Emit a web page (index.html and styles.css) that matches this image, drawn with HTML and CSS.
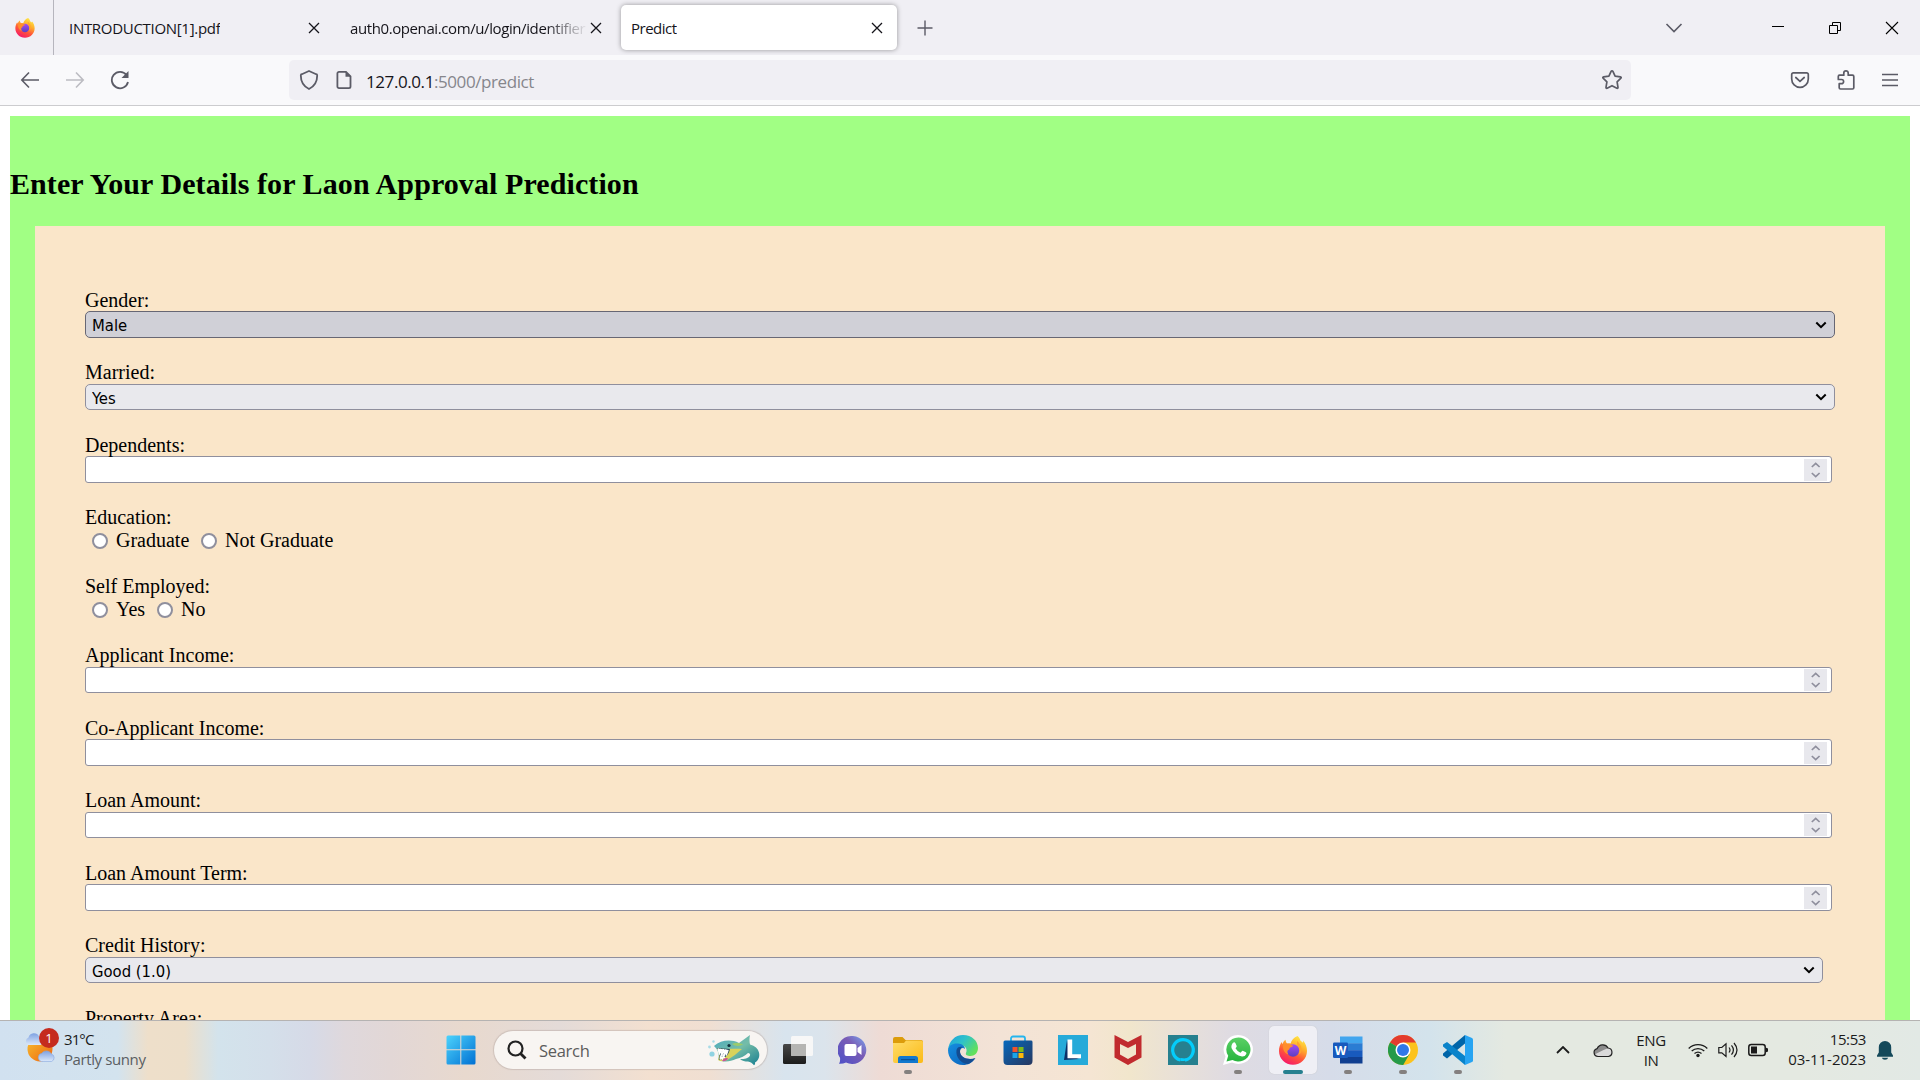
FILE: index.html
```html
<!DOCTYPE html>
<html lang="en">
<head>
<meta charset="utf-8">
<title>Predict</title>
<link rel="stylesheet" href="styles.css">
</head>
<body>
<svg class="defs" width="0" height="0" aria-hidden="true">
  <defs>
    <linearGradient id="flame" x1="0.8" y1="0" x2="0.3" y2="1"><stop offset="0" stop-color="#fff04a"/><stop offset=".35" stop-color="#ffb02c"/><stop offset=".65" stop-color="#ff5638"/><stop offset="1" stop-color="#f5156c"/></linearGradient>
    <linearGradient id="globe" x1="0" y1="0" x2="0" y2="1"><stop offset="0" stop-color="#a34cf5"/><stop offset="1" stop-color="#5b3fc0"/></linearGradient>
    <linearGradient id="win" x1="0" y1="0" x2="1" y2="1"><stop offset="0" stop-color="#4cd3fc"/><stop offset="1" stop-color="#0070d3"/></linearGradient>
    <linearGradient id="sun" x1="0" y1="0" x2="1" y2="1"><stop offset="0" stop-color="#f7c02f"/><stop offset="1" stop-color="#ee6412"/></linearGradient>
    <linearGradient id="cloud" x1="0" y1="0" x2="0" y2="1"><stop offset="0" stop-color="#7fa2e2"/><stop offset="1" stop-color="#dbe8fa"/></linearGradient>
    <linearGradient id="fish" x1="0" y1="0" x2="1" y2="1"><stop offset="0" stop-color="#4aa9c1"/><stop offset=".5" stop-color="#75bda8"/><stop offset="1" stop-color="#187f91"/></linearGradient>
    <linearGradient id="chat" x1="0" y1="1" x2="1" y2="0"><stop offset="0" stop-color="#4b50c9"/><stop offset=".6" stop-color="#7a5cb5"/><stop offset="1" stop-color="#79a8f0"/></linearGradient>
    <linearGradient id="folder" x1="0" y1="0" x2="1" y2="1"><stop offset="0" stop-color="#ffdd6b"/><stop offset="1" stop-color="#fbba16"/></linearGradient>
    <linearGradient id="edgeTop" x1="0" y1="0" x2="1" y2=".6"><stop offset="0" stop-color="#1e9fe0"/><stop offset=".5" stop-color="#2fc2c9"/><stop offset="1" stop-color="#62e05b"/></linearGradient>
    <linearGradient id="edgeLow" x1="0" y1="0" x2="1" y2="1"><stop offset="0" stop-color="#168ee0"/><stop offset="1" stop-color="#0a5fb8"/></linearGradient>
    <linearGradient id="store" x1="0" y1="0" x2="1" y2="1"><stop offset="0" stop-color="#0669bd"/><stop offset="1" stop-color="#27375f"/></linearGradient>
    <linearGradient id="wa" x1="0" y1="0" x2="0" y2="1"><stop offset="0" stop-color="#5bd066"/><stop offset="1" stop-color="#27b43e"/></linearGradient>
    <linearGradient id="dark" x1="0" y1="0" x2="0" y2="1"><stop offset="0" stop-color="#474747"/><stop offset="1" stop-color="#1c1c1c"/></linearGradient>
    <symbol id="firefox" viewBox="0 0 28 29">
      <path d="M18.5 0c1.6 1.3 2.6 3.2 3.2 5 1 .3 1.600.9 2.300 1.700.2-1 .1-1.500 0-2.100C26.500 7.500 28 11 28 15c0 7.700-6.200 13.800-14 13.800S0 22.700 0 15c0-3.400 1-6.200 2.600-9 .3 1 .7 1.600 1.100 2C4 6.300 5.200 4.600 6.600 3.800 6.600 5.300 7 6.600 8.300 7.600c1-.4 2.300-.4 3.300-.2C12.500 4 15 1.300 18.500 0z" fill="url(#flame)"/>
      <circle cx="14" cy="14.500" r="6.200" fill="url(#globe)"/>
      <path d="M4 9c2-1 4-1.500 6-.8 1.300.4 2 1.100 4.200 1.200-.4 1.300-1.600 1.500-3 2-.7.400-.8 1.300-.9 2.100C8 14 8 16.500 9.500 18.500 5.500 18 3.500 13 4 9z" fill="#ff8d2c"/>
      <path d="M18 9c3 2 3.500 6.500 1.500 9.500C24 17 23.500 9.500 18 5z" fill="#ffa52d"/>
    </symbol>
    <symbol id="x" viewBox="0 0 12 12"><path d="M1 1l10 10M11 1L1 11" fill="none" stroke="#15141a" stroke-width="1.300"/></symbol>
    <symbol id="down" viewBox="0 0 12 8"><path d="M1.300 1.500L6 6.200l4.700-4.700" fill="none" stroke="#000" stroke-width="2"/></symbol>
    <symbol id="spin" viewBox="0 0 23 22"><path fill="#e8e8ed" d="M0 0h23v22H0z"/><path d="M7.800 8l3.900-3.600L15.600 8M7.800 14l3.900 3.600 3.900-3.600" fill="none" stroke="#8f8f9d" stroke-width="1.700"/></symbol>
  </defs>
</svg>

<header class="tabs">
  <div class="pinned"><svg width="20" height="20"><use href="#firefox"/></svg></div>
  <div class="tab tab-first"><span class="tab-title t-intro">INTRODUCTION[1].pdf</span><svg class="close" width="12" height="12"><use href="#x"/></svg></div>
  <div class="tab tab-second"><span class="tab-title t-auth">auth0.openai.com/u/login/identifier</span><svg class="close" width="12" height="12"><use href="#x"/></svg></div>
  <div class="tab tab-active"><span class="tab-title">Predict</span><svg class="close" width="12" height="12"><use href="#x"/></svg></div>
  <svg class="plus" width="16" height="16"><path d="M8 .5v15M.5 8h15" stroke="#5b5b66" stroke-width="1.400"/></svg>
  <div class="window-controls">
    <svg width="18" height="12"><path d="M1.500 2l7.500 7.500L16.500 2" fill="none" stroke="#5b5b66" stroke-width="1.600"/></svg>
    <svg width="12" height="12"><path d="M0 4.500h12" stroke="#000"/></svg>
    <svg width="12" height="12"><path d="M.5 3.500h8v8h-8zM3.500 3.500v-3h8v8h-3" fill="none" stroke="#000"/></svg>
    <svg width="14" height="14"><path d="M1 1l12 12M13 1L1 13" stroke="#000" stroke-width="1.100"/></svg>
  </div>
</header>

<nav class="toolbar">
  <div class="nav-buttons">
    <svg width="20" height="20" fill="none" stroke="#5b5b66" stroke-width="1.600"><path d="M19 10H2M9 2.500L1.800 10 9 17.500"/></svg>
    <svg width="20" height="20" fill="none" stroke="#bcbcc2" stroke-width="1.600"><path d="M1 10h17M11 2.500l7.200 7.500-7.200 7.500"/></svg>
    <svg width="20" height="20" fill="none" stroke="#5b5b66" stroke-width="1.800"><path d="M16.500 5A8.200 8.200 0 1 0 18 12"/><path d="M18.500 1v7h-7z" fill="#5b5b66" stroke="none"/></svg>
  </div>
  <div class="url-bar">
    <svg width="20" height="22" fill="none" stroke="#5b5b66" stroke-width="1.800"><path d="M10 2l7.200 3.200c.9 0 1 .5 1 1.300 0 6.500-2.700 10.800-8.200 13.500C4.500 17.300 1.800 13 1.800 6.500c0-.8.1-1.300 1-1.300z" stroke-linejoin="round"/></svg>
    <svg class="doc" width="16" height="20" fill="none" stroke="#5b5b66" stroke-width="1.800"><path d="M3 1.900h7l4.500 4.500V16.500a1.600 1.600 0 0 1-1.600 1.600H3a1.600 1.600 0 0 1-1.600-1.600v-13A1.600 1.600 0 0 1 3 1.900z"/><path d="M9.500 1.500v5.300h5.500z" fill="#5b5b66" stroke="none"/></svg>
    <span class="url">127.0.0.1<span class="url-path">:5000/predict</span></span>
    <svg class="star" width="22" height="22" fill="none" stroke="#5b5b66" stroke-width="1.700" stroke-linejoin="round"><path d="M11 1.800q.6 0 .9.600l2.200 4.700 5.300.7q1.300.3.500 1.300l-3.800 3.700.9 5.500q.1 1.300-1.100.9L11 16.700l-4.900 2.500q-1.200.4-1.100-.9l.9-5.500-3.800-3.700q-.8-1 .5-1.300l5.300-.7 2.200-4.700q.3-.6.9-.6z"/></svg>
  </div>
  <div class="tools">
    <svg width="20" height="18" fill="none" stroke="#5b5b66" stroke-width="1.700"><path d="M3.300 1.900h13.400a1.600 1.600 0 0 1 1.600 1.600V8a8.300 8.300 0 0 1-16.600 0V3.500a1.600 1.600 0 0 1 1.600-1.600z"/><path d="M5.800 6.500L10 10.300l4.200-3.800" stroke-linecap="round"/></svg>
    <svg width="20" height="22" fill="none" stroke="#5b5b66" stroke-width="1.700" stroke-linejoin="round"><path d="M3.500 6.200h4.300V4a2.200 2.200 0 0 1 4.400 0v2.200h4.300a1.300 1.300 0 0 1 1.300 1.300v11.200a1.300 1.300 0 0 1-1.300 1.300h-12a1.300 1.300 0 0 1-1.300-1.300v-4h2.300a2.100 2.100 0 0 0 0-4.200H2.300V7.400a1.200 1.200 0 0 1 1.200-1.200z"/></svg>
    <svg width="16" height="14" stroke="#5b5b66" stroke-width="1.500"><path d="M0 1.500h16M0 7h16M0 12.500h16"/></svg>
  </div>
</nav>

<main class="viewport">
  <div class="page">
    <h2>Enter Your Details for Laon Approval Prediction</h2>
    <form class="details">
      <div class="field"><label>Gender:</label>
        <div class="select hover"><select><option>Male</option></select><svg width="12" height="8"><use href="#down"/></svg></div></div>
      <div class="field"><label>Married:</label>
        <div class="select"><select><option>Yes</option></select><svg width="12" height="8"><use href="#down"/></svg></div></div>
      <div class="field"><label>Dependents:</label>
        <div class="number"><input type="number"><svg width="23" height="22"><use href="#spin"/></svg></div></div>
      <div class="field radios"><label>Education:</label>
        <div class="options"><input type="radio" name="education"><span class="opt-graduate">Graduate</span><input type="radio" name="education"><span>Not Graduate</span></div></div>
      <div class="field radios"><label>Self Employed:</label>
        <div class="options"><input type="radio" name="employed"><span class="opt-yes">Yes</span><input type="radio" name="employed"><span>No</span></div></div>
      <div class="field"><label>Applicant Income:</label>
        <div class="number"><input type="number"><svg width="23" height="22"><use href="#spin"/></svg></div></div>
      <div class="field"><label>Co-Applicant Income:</label>
        <div class="number"><input type="number"><svg width="23" height="22"><use href="#spin"/></svg></div></div>
      <div class="field"><label>Loan Amount:</label>
        <div class="number"><input type="number"><svg width="23" height="22"><use href="#spin"/></svg></div></div>
      <div class="field"><label>Loan Amount Term:</label>
        <div class="number"><input type="number"><svg width="23" height="22"><use href="#spin"/></svg></div></div>
      <div class="field"><label>Credit History:</label>
        <div class="select credit"><select><option>Good (1.0)</option></select><svg width="12" height="8"><use href="#down"/></svg></div></div>
      <div class="field"><label>Property Area:</label></div>
    </form>
  </div>
</main>

<footer class="taskbar">
  <div class="weather">
    <div class="weather-icon">
      <svg width="34" height="32"><circle cx="16" cy="17" r="12.500" fill="url(#sun)"/><path d="M4.500 13a4 4 0 0 1 0-7.500 5.600 5.600 0 0 1 10.500-1 4.500 4.500 0 0 1 1.500 8.500z" fill="url(#cloud)"/><path d="M17.500 29.500a4.200 4.200 0 0 1 .3-8.200 5.600 5.600 0 0 1 9.500.6 4 4 0 0 1 .2 7.600z" fill="url(#cloud)" stroke="#88a8df" stroke-width=".6"/></svg>
      <span class="badge">1</span>
    </div>
    <div class="weather-text"><span class="temp">31°C</span><span class="sky">Partly sunny</span></div>
  </div>

  <div class="apps">
    <div class="app start"><svg width="30" height="30"><path d="M.5 2a1.500 1.500 0 0 1 1.500-1.500h12.300v13.800H.5zM15.300.5H28a1.500 1.500 0 0 1 1.500 1.500v12.300H15.300zM.5 15.300h13.800v14.200H2A1.500 1.500 0 0 1 .5 28zM15.300 15.300h14.200V28a1.500 1.500 0 0 1-1.500 1.500H15.300z" fill="url(#win)"/></svg></div>
    <div class="search">
      <svg width="20" height="20" fill="none" stroke="#222" stroke-width="2.200"><circle cx="8.500" cy="8.500" r="7"/><path d="M13.500 13.500l5 5" stroke-width="2.800"/></svg>
      <span>Search</span>
      <svg class="fish" width="54" height="32"><path d="M7 12C14 6 24 5 32 9L43 1c-.8 3-.5 7 0 9.500 5 1.500 8 4 9 8 1 4-.5 8-4 10 .3 1 0 2-1 2.800-1.500-2-3.500-3.300-6-3.800-3 0-6-.5-8-2.500 5 .5 9-1 10-3.500.5-1.500-.5-2.500-2-2.500-3 3-7 5-12 6-6 3-13 3.500-18 .500 2-4 0-10-4-13.500z" fill="url(#fish)"/><path d="M11 26c2-4 1-8-1-12 9 2 17 0 25 1-5 4-9 8-15 11-3 1.500-6 2-9 0z" fill="#d9d25a"/><path d="M10 14l13 1c-1 5-4 9-11 11 1-4 1-8-2-12z" fill="#284a5c"/><path d="M11 14.500l1.500 6 1.300-5.500 1 7 1.600-7 .8 7 1.700-6.500.3 6 2-5.500M13 25.500l.8-3.500 1.500 3 1-3.500 1.500 2.500" fill="#fff" stroke="#fff" stroke-width="1.200"/><path d="M15 27c1.500-2.500 4-3.500 6-2.500-1 2-3.500 3-6 2.500z" fill="#c6559b"/><path d="M25 10c3-1.500 8-1.500 11 .5-3 2-8 2-11-.5z" fill="#9ccb6c"/><circle cx="22" cy="11.500" r="1.600" fill="#12313f"/><circle cx="5" cy="20" r="2.600" fill="#8fd3e2"/><circle cx="2.500" cy="13" r="1.400" fill="#a8dbe6"/><circle cx="6.500" cy="7.500" r="1.200" fill="#a8dbe6"/></svg>
    </div>
    <div class="app"><svg width="30" height="30"><rect y="9" width="23" height="20" rx="1.500" fill="url(#dark)"/><rect x="8" y="1" width="22" height="20" rx="1.500" fill="#f7f7f7"/><path d="M8 9h15v12H9.500A1.500 1.500 0 0 1 8 19.500z" fill="#b5b5b3"/></svg></div>
    <div class="app"><svg width="30" height="30"><path d="M15 1a14 14 0 1 1-7 26.500q-3 1.500-7 1.300 1.500-2.500 1-6A14 14 0 0 1 15 1z" fill="url(#chat)"/><rect x="6.500" y="9" width="12" height="12" rx="2" fill="#fff"/><path d="M19.500 13l4-3v10l-4-3z" fill="#fff"/></svg></div>
    <div class="app running"><svg width="30" height="30"><path d="M0 4a2 2 0 0 1 2-2h7.500l3 3H28a2 2 0 0 1 2 2v8H0z" fill="#dc9c0b"/><path d="M0 8h11l2-2.500h15a2 2 0 0 1 2 2V26a2 2 0 0 1-2 2H2a2 2 0 0 1-2-2z" fill="url(#folder)"/><path d="M5 28v-4.500a2.500 2.500 0 0 1 2.500-2.500h15a2.500 2.500 0 0 1 2.500 2.500V28z" fill="#1278ce"/><path d="M8 24.700h14" stroke="#0a4b8c"/></svg></div>
    <div class="app"><svg width="30" height="30"><path d="M0 15C1 6 7 0 15 0c9 0 15 6 15 13 0 5-3.500 8-7.500 8-3 0-5.500-1-4.500-3 2-4-1-8-6-8C6 10 2 12 0 15z" fill="url(#edgeTop)"/><path d="M0 15C1 10 5 8 10 8.500c4 .3 7 2.500 7 5.500-2-2-5-1-5 2.500 0 5 6 9 15 7C24 28 20 30 15 30 6 30 0 23 0 15z" fill="url(#edgeLow)"/><path d="M8.500 15c-1 7 4 13 11 14 3-.8 6-3 8-6-8 3-16-1-15.500-7 0-2 1-3.500 3-4-3.500-.8-6 .5-6.500 3z" fill="#144c91"/></svg></div>
    <div class="app"><svg width="30" height="30"><path d="M8 8V3.500A2 2 0 0 1 10 1.500h10a2 2 0 0 1 2 2V8" fill="none" stroke="#24b5ee" stroke-width="1.800"/><path d="M.5 7A1.500 1.500 0 0 1 2 5.500h26A1.500 1.500 0 0 1 29.500 7v19a4 4 0 0 1-4 4h-21a4 4 0 0 1-4-4z" fill="url(#store)"/><path d="M9.500 12h5v5h-5z" fill="#f3532b"/><path d="M15.500 12h5v5h-5z" fill="#7fba18"/><path d="M9.500 18h5v5h-5z" fill="#1ba4e8"/><path d="M15.500 18h5v5h-5z" fill="#feb80a"/></svg></div>
    <div class="app"><svg width="30" height="30"><path d="M0 0h30v30H0z" fill="#26aad9"/><path d="M9 5L6 25l15-1-8-3z" fill="#0b2f67"/><path d="M9.500 4.500h4.700v14.800H23v4H9.500z" fill="#fff"/></svg></div>
    <div class="app"><svg width="30" height="30"><path d="M1.500 0L15 7l13.500-7v22.500L15 30 1.500 22.500zM7 9v10.500l8 4.500 8-4.500V9l-8 4z" fill="#c12b2e" fill-rule="evenodd"/></svg></div>
    <div class="app"><svg width="30" height="30"><path d="M0 0h30v30H0z" fill="#26808f"/><path d="M12.500 25A10.300 10.300 0 1 1 17 25.100" fill="none" stroke="#04cdfb" stroke-width="3.200"/><path d="M17 23.500l4 1-5 1.500h-3.500v-3z" fill="#04cdfb"/></svg></div>
    <div class="app running"><svg width="30" height="30"><path d="M15.500 0A14.500 14.500 0 1 1 9 27.500L0 30l2.500-8.500A14.500 14.500 0 0 1 15.500 0z" fill="#fff"/><path d="M15.500 2.500a12 12 0 1 1-6 22.400l-6 1.600 1.700-5.700A12 12 0 0 1 15.500 2.500z" fill="url(#wa)"/><path d="M10.500 7.500q1.300-.5 2 .8l1.200 2.700q.2.800-1.200 2.200 1.800 3.300 5 4.500l1.600-1.700q.5-.5 1.200-.1l2.600 1.300q.8.500.4 1.700-1.200 2.800-4.300 2.600-7.500-1.400-10.500-8.500-.6-3.500 2-5.500z" fill="#fff"/></svg></div>
    <div class="app running current"><svg width="28" height="29"><use href="#firefox"/></svg></div>
    <div class="app running"><svg width="30" height="30"><path d="M7 1.500h22.500V8.500H7z" fill="#41a5ee"/><path d="M7 8.300h22.500v7H7z" fill="#2b7cd3"/><path d="M7 15.200h22.500v7H7z" fill="#185abd"/><path d="M7 22h22.500v6.500H7z" fill="#103f91"/><rect y="7.500" width="15" height="15.500" rx="1.300" fill="#185abd"/><text x="7.500" y="19.500" text-anchor="middle" class="word-mark">W</text></svg></div>
    <div class="app running"><svg width="30" height="30"><circle cx="15" cy="15" r="15" fill="#fcc31e"/><path d="M15 15L2 7.500A15 15 0 0 1 28 7.500H15z" fill="#e33b2e"/><path d="M15 15L2 7.500A15 15 0 0 0 15.200 30l6.300-11z" fill="#259a49"/><circle cx="15" cy="15" r="7.500" fill="#fff"/><circle cx="15" cy="15" r="6" fill="#2f78e8"/></svg></div>
    <div class="app running"><svg width="30" height="30"><path d="M22 0v8.500L4 23.500 0 20.500v-2z" fill="#0065a9"/><path d="M0 11.500v-2L4 7l18 14v9L0 11.500z" fill="#0a83ca"/><path d="M22 0l7 3q1 .5 1 1.500v21q0 1-1 1.500l-7 3z" fill="#27a4f2"/></svg></div>
  </div>

  <div class="tray">
    <svg width="14" height="8" fill="none" stroke="#1b1b1b" stroke-width="1.800"><path d="M1 7l6-6 6 6"/></svg>
    <svg class="onedrive" width="20" height="15"><path d="M5 13.500a4 4 0 0 1-.8-7.900A6 6 0 0 1 15 5a4.300 4.300 0 0 1 .5 8.500z" fill="#dadada"/><path d="M4.500 5.500A6 6 0 0 1 15.500 5l-5 2-9 4.500c-1-3 .5-5.500 3-6z" fill="#8c8c8c"/><path d="M5 13.500a4 4 0 0 1-.8-7.900A6 6 0 0 1 15 5a4.300 4.300 0 0 1 .5 8.500z" fill="none" stroke="#222" stroke-width="1.200"/></svg>
    <div class="lang"><span>ENG</span><span>IN</span></div>
    <div class="status">
      <svg width="20" height="16" fill="none" stroke="#1b1b1b" stroke-width="1.300"><path d="M.7 6.500a13 13 0 0 1 18.600 0M3.700 9a9.300 9.300 0 0 1 12.600 0M6.500 11.500a5.500 5.500 0 0 1 7 0"/><circle cx="10" cy="13.500" r="1.700" fill="#1b1b1b" stroke="none"/></svg>
      <svg width="20" height="16" fill="none" stroke="#1b1b1b" stroke-width="1.200"><path d="M.8 5.500h3L8 1.800v12.700l-4.200-3.700h-3zM11 5.500q2 2.500 0 5M13.500 3.300q3.800 4.700 0 9.400M16 1q6 7 0 14"/></svg>
      <svg width="20" height="14" fill="none" stroke="#1b1b1b" stroke-width="1.500"><rect x=".8" y="1.500" width="16.400" height="11" rx="2.500"/><path d="M3 3.500h6v7H3z" fill="#1b1b1b" stroke="none"/><path d="M17.500 4.500l2.500 1v3l-2.500 1z" fill="#1b1b1b" stroke="none"/></svg>
    </div>
    <div class="clock"><span class="time">15:53</span><span class="date">03-11-2023</span></div>
    <svg width="16" height="19"><path d="M8 0a6.200 6.200 0 0 1 6.200 6.200v5.300l1.800 3v1.200H0v-1.200l1.800-3V6.200A6.200 6.200 0 0 1 8 0zM4.800 16.800h6.400a3.300 2.500 0 0 1-6.400 0z" fill="#14495a"/></svg>
  </div>
</footer>
</body>
</html>
```
FILE: styles.css
```css
* { box-sizing: border-box; }

html, body { height: 100%; }

body {
  margin: 0;
  width: 1920px;
  height: 1080px;
  overflow: hidden;
  display: flex;
  flex-direction: column;
  background: #fff;
  font-family: "Open Sans", "Noto Sans", sans-serif;
}

svg { display: block; flex: none; }
.defs { position: absolute; }

/* Tab strip */
.tabs {
  height: 55px;
  flex: none;
  display: flex;
  align-items: center;
  background: #f0eff4;
  color: #15141a;
  font-size: 15px;
}
.pinned {
  width: 54px;
  height: 55px;
  padding-left: 15px;
  border-right: 1px solid #b6b5bd;
  display: flex;
  align-items: center;
}
.tab {
  height: 45px;
  display: flex;
  align-items: center;
  justify-content: space-between;
}
.tab-title { white-space: nowrap; overflow: hidden; letter-spacing: -0.5px; }
.t-intro { letter-spacing: -0.3px; }
.tab-first { width: 282px; padding: 0 16px 0 15px; }
.tab-second { width: 285px; padding: 0 19px 0 14px; }
.t-auth {
  width: 236px;
  letter-spacing: -0.4px;
  -webkit-mask-image: linear-gradient(to right, #000 195px, transparent 238px);
  mask-image: linear-gradient(to right, #000 195px, transparent 238px);
}
.tab-active {
  width: 276px;
  padding: 0 14px 0 10px;
  background: #fff;
  border-radius: 5px;
  box-shadow: 0 0 5px rgba(0, 0, 0, .38);
}
.plus { margin-left: 20px; }
.window-controls { margin-left: auto; display: flex; align-items: center; padding-right: 21px; }
.window-controls svg:nth-child(2) { margin-left: 89px; }
.window-controls svg:nth-child(3) { margin-left: 45px; }
.window-controls svg:nth-child(4) { margin-left: 44px; }

/* Address row */
.toolbar {
  height: 51px;
  flex: none;
  display: flex;
  align-items: center;
  background: #f9f9fb;
  border-bottom: 1px solid #cccccf;
}
.nav-buttons { width: 289px; padding-left: 20px; display: flex; gap: 25px; }
.url-bar {
  width: 1342px;
  height: 40px;
  padding: 0 8px 0 10px;
  display: flex;
  align-items: center;
  background: #f0eff4;
  border-radius: 5px;
}
.doc { margin-left: 17px; }
.url { margin-left: 14px; padding-top: 2px; font-size: 17px; letter-spacing: -0.42px; color: #15141a; }
.url-path { color: #86868c; }
.star { margin-left: auto; }
.tools { margin-left: auto; display: flex; align-items: center; gap: 26px; padding-right: 22px; }

/* Page */
.viewport { height: 914px; flex: none; overflow: hidden; padding: 10px 10px 0; }
.page {
  height: 1200px;
  padding-top: 51px;
  background: #a1ff84;
  color: #000;
  font-family: "Liberation Serif", "Times New Roman", serif;
}
h2 { margin: 0 0 25px; font-size: 30px; line-height: 34px; font-weight: 700; letter-spacing: 0.09px; }
.details { margin: 0 25px; height: 1100px; padding: 62.75px 50px 0; background: #fae6c9; font-size: 20px; }
.field { height: 72.5px; }
.field.radios { height: 69px; }
.field label { display: block; height: 22.5px; line-height: 23px; }

.select, .number {
  height: 26.5px;
  display: flex;
  align-items: center;
  border: 1px solid #8f8f9d;
}
.select { background: #e9e9ed; border-radius: 5px; padding-right: 7px; }
.select.hover { background: #d0d0d7; border-color: #676774; }
.select.credit { width: 1738px; }
.select select {
  flex: 1;
  height: 100%;
  padding: 2px 0 0 6px;
  appearance: none;
  border: 0;
  outline: 0;
  background: none;
  color: #000;
  font: 16.5px "DejaVu Sans Condensed", "DejaVu Sans", sans-serif;
  font-stretch: condensed;
}
.number { width: 1747px; background: #fff; border-radius: 3px; padding-right: 4px; }
.number input { flex: 1; height: 100%; border: 0; outline: 0; background: none; appearance: none; }
.number input::-webkit-inner-spin-button { display: none; }

.options { display: flex; align-items: center; height: 23px; padding-left: 7px; line-height: 23px; }
.options input {
  appearance: none;
  width: 16px;
  height: 16px;
  margin: 1px 8px 0 0;
  border: 2px solid #8f8f9d;
  border-radius: 50%;
  background: #fff;
}
.opt-graduate { width: 85px; }
.opt-yes { width: 41px; }

/* Taskbar */
.taskbar {
  height: 60px;
  flex: none;
  display: flex;
  align-items: center;
  padding-bottom: 1px;
  border-top: 1px solid #b5b3b2;
  color: #1b1b1b;
  font-size: 15px;
  background: linear-gradient(to right, #d1e1f0 0, #d3e3ee 118px, #eedfca 148px, #eddfca 185px, #d3e3ec 218px, #d4dfea 270px, #d6dae7 310px, #dfd8dc 345px, #e2d7d6 390px, #e8d9ce 465px, #e4dbd8 560px, #f3e0d0 650px, #f0dfd2 710px, #d8e4ee 785px, #dbe4ec 825px, #eedbd5 880px, #f3e3d6 1000px, #f5e5d3 1090px, #f1e6cc 1130px, #e8e0d8 1180px, #dfdbe2 1230px, #d6dce9 1330px, #d3e3ec 1430px, #e4e9e1 1505px, #e4e9e1 1800px, #e2e9e5 1920px);
}
.weather { width: 434px; padding-left: 24px; display: flex; align-items: center; }
.weather-icon { position: relative; top: -2px; }
.badge {
  position: absolute;
  left: 15px;
  top: -4px;
  width: 20px;
  height: 20px;
  border-radius: 50%;
  background: #c52b1e;
  color: #fff;
  font-size: 13px;
  line-height: 20px;
  text-align: center;
}
.weather-text { margin-left: 6px; padding-bottom: 3px; display: flex; flex-direction: column; line-height: 20px; }
.temp { letter-spacing: -0.9px; }
.sky { color: #5a5e62; letter-spacing: -0.4px; }

.apps { display: flex; align-items: center; }
.app {
  position: relative;
  width: 55px;
  height: 48px;
  display: flex;
  align-items: center;
  justify-content: center;
}
.start { padding-right: 1px; }
.running::after {
  content: "";
  position: absolute;
  left: 24px;
  bottom: 0;
  width: 8px;
  height: 4px;
  border-radius: 2px;
  background: #84807f;
}
.current { width: 48px; margin: 0 3px 0 4px; background: #efeff5; border-radius: 5px; box-shadow: 0 0 1px #bbb; }
.current::after { left: 14px; width: 20px; background: #26808f; }
.word-mark { font: 700 12px "Open Sans", sans-serif; fill: #fff; }
.search {
  width: 273px;
  height: 38px;
  margin: 0 3px 0 5px;
  padding: 0 6px 0 13px;
  display: flex;
  align-items: center;
  background: #f8f5f2;
  border-radius: 19px;
  box-shadow: 0 0 1px 1px rgba(170, 155, 150, .4);
  color: #5c5c5c;
}
.search span { margin-left: 12px; font-size: 16.5px; letter-spacing: -0.3px; }
.fish { margin-left: auto; }

.tray { margin-left: auto; display: flex; align-items: center; padding-right: 27px; }
.onedrive { margin-left: 23px; }
.lang { margin-left: 22px; padding-bottom: 1px; width: 32px; display: flex; flex-direction: column; align-items: center; line-height: 20px; letter-spacing: -0.4px; }
.status { margin-left: 21px; display: flex; align-items: center; gap: 10px; }
.clock { width: 98px; padding-bottom: 3px; display: flex; flex-direction: column; align-items: flex-end; line-height: 20px; margin-right: 11px; }
.time { letter-spacing: -0.4px; }
.date { letter-spacing: -0.05px; }
```
